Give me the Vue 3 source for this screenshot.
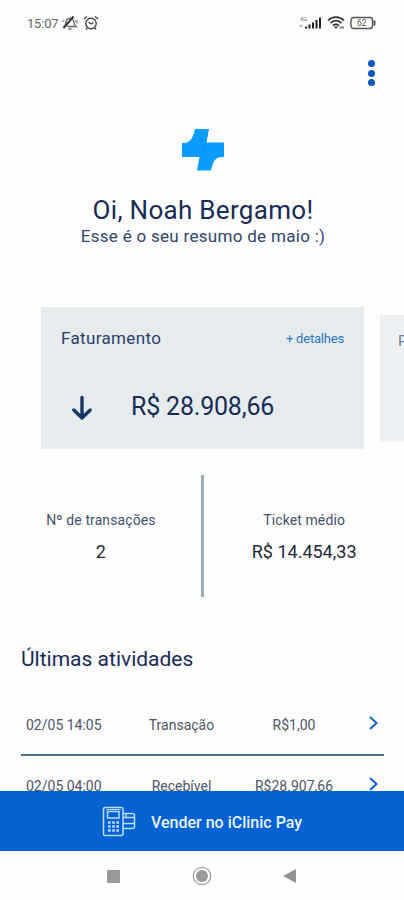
<script setup>
const activities = [
  { date: '02/05 14:05', kind: 'Transação', value: 'R$1,00' },
  { date: '02/05 04:00', kind: 'Recebível', value: 'R$28.907,66' },
]
</script>

<template>
  <div class="screen">
    <header class="status">
      <span class="time">15:07</span>
      <svg class="bell" width="17" height="16" viewBox="0 0 17 16" fill="none" stroke="#666" stroke-width="1.3">
        <path d="M4 10.500C5 9 4.500 6.500 6 4.500C8 2.600 11.500 3 12.500 5.500C13.300 8 13 10 15 11.500H6M7.500 14H10.500" />
        <path d="M2.500 13L12.500 1.500" stroke="#333" stroke-width="2" />
        <path d="M0.500 6.500L3.500 5.500M14 6.500L16 6V8.500" stroke="#888" />
      </svg>
      <svg class="alarm" width="16" height="16" viewBox="0 0 16 16" fill="none" stroke="#444" stroke-width="1.4">
        <circle cx="8" cy="8.500" r="5.200" />
        <path d="M1 4L4 1.500M12 1.500L15 4M5.500 7L8 9L10.500 7.500M4 13L3 14.500M12 13L13 14.500" />
      </svg>
      <span class="grow"></span>
      <svg class="signal" width="24" height="16" viewBox="0 0 24 16" fill="#222">
        <text x="2" y="5.500" font-size="6" fill="#777">4G</text>
        <path d="M1 11H5M3 9.500V12.500" stroke="#aaa" />
        <path d="M7 11.500h2.200v2H7zM10.500 9.500h2v4h-2zM14 7.500h2v6h-2zM17.500 5h2v8.500h-2zM21 2.500h2v11h-2z" />
      </svg>
      <svg class="wifi" width="18" height="16" viewBox="0 0 18 16" fill="none" stroke="#333" stroke-width="1.7">
        <path d="M1 5.500C5.500 1 12.500 1 17 5.500M3.500 8C7 5 11 5 14.500 8M6 10.500C8 9 10 9 12 10.500" />
        <path d="M7 11.500H11L9 14Z" fill="#333" stroke="none" />
        <path d="M12.500 12.500H17" stroke="#999" stroke-width="2.500" />
      </svg>
      <svg class="battery" width="27" height="14" viewBox="0 0 27 14" fill="none" stroke="#555" stroke-width="1.4">
        <rect x="1" y="1.500" width="21.500" height="11" rx="2.500" />
        <path d="M24.500 4.500V9.500" stroke-width="2" />
        <text x="7" y="10" font-size="8.500" fill="#555" stroke="none">62</text>
      </svg>
    </header>

    <div class="menu"><i></i><i></i><i></i></div>

    <svg class="logo" width="42" height="42" viewBox="0 0 42 42">
      <path d="M13 0H27L24.500 13.500H42V28H40C34.500 28 32 31.500 30.500 36L29 41.500H15L17.500 28H0V14H2C8 13.500 10.500 9 12 4Z" fill="#0b9dfd" />
      <path d="M24.500 13.500C23.500 21 20.500 26 14 28H17.500C18.500 22 20 17 24.500 13.500Z" fill="#0b93f5" />
    </svg>

    <h1>Oi, Noah Bergamo!</h1>
    <p class="summary">Esse é o seu resumo de maio :)</p>

    <section class="carousel">
      <article class="card">
        <div class="card-head">
          <span class="card-title">Faturamento</span>
          <a class="details">+ detalhes</a>
        </div>
        <div class="card-value">
          <svg width="22" height="26" viewBox="0 0 22 26" fill="none" stroke="#173763" stroke-width="3.4" stroke-linecap="round" stroke-linejoin="round">
            <path d="M11 2.500V22.500M2.800 15L11 23L19.200 15" />
          </svg>
          <span class="amount">R$ 28.908,66</span>
        </div>
      </article>
      <article class="next-card">P</article>
    </section>

    <section class="stats">
      <div class="stat">
        <span class="label">Nº de transações</span>
        <span class="number">2</span>
      </div>
      <div class="divider"></div>
      <div class="stat">
        <span class="label">Ticket médio</span>
        <span class="number">R$ 14.454,33</span>
      </div>
    </section>

    <section class="activities">
      <h2>Últimas atividades</h2>
      <div v-for="item in activities" :key="item.date" class="row">
        <span class="date">{{ item.date }}</span>
        <span class="kind">{{ item.kind }}</span>
        <span class="value">{{ item.value }}</span>
        <svg width="9" height="14" viewBox="0 0 9 14" fill="none" stroke="#0d62cb" stroke-width="2">
          <path d="M1 1L7.500 7L1 13" />
        </svg>
      </div>
    </section>

    <button class="sell">
      <svg width="34" height="31" viewBox="0 0 34 31" fill="none" stroke="#b9dcff" stroke-width="1.5">
        <rect x="1.500" y="1.500" width="19.500" height="28" rx="1.500" />
        <rect x="5.500" y="5.500" width="11.500" height="6.500" />
        <path d="M4 3.500H18.500" stroke-width="1" />
        <path d="M6 16.500H17M6 20.500H17M6 24.500H17" stroke-width="2.400" stroke-dasharray="2.600 1.600" />
        <path d="M21 7.500H30.500Q32.500 7.500 32.500 9.500V20.500Q32.500 22.500 30.500 22.500H21M21 11.500H32.500M21 17.500H32.500M24 7.500V11.500" />
      </svg>
      <span>Vender no iClinic Pay</span>
    </button>

    <nav class="system">
      <svg width="13" height="13" viewBox="0 0 13 13"><path d="M0 0H13V13H0Z" fill="#999" /></svg>
      <svg width="20" height="20" viewBox="0 0 20 20">
        <circle cx="10" cy="10" r="8.700" fill="none" stroke="#a3a3a3" stroke-width="1.300" />
        <circle cx="10" cy="10" r="6" fill="#999" />
      </svg>
      <svg width="13" height="14" viewBox="0 0 13 14"><path d="M0 7L13 0V14Z" fill="#929292" /></svg>
    </nav>
  </div>
</template>

<style>
body { margin: 0; background: #fefefe; }
</style>

<style scoped>
.screen {
  width: 404px;
  height: 900px;
  overflow: hidden;
  display: flex;
  flex-direction: column;
  background: #fefefe;
  color: #182b57;
  font-family: Roboto, "Liberation Sans", sans-serif;
}
svg { display: block; flex: none; }
.status {
  height: 46px;
  flex: none;
  box-sizing: border-box;
  padding: 0 27px;
  display: flex;
  align-items: center;
  color: #666;
}
.time { width: 33px; font-size: 13px; letter-spacing: -0.2px; white-space: nowrap; }
.bell { margin-left: 1px; }
.alarm { margin-left: 5px; }
.grow { flex: 1; }
.wifi { margin-left: 5px; }
.battery { margin-left: 5px; }
.menu {
  flex: none;
  height: 82.5px;
  box-sizing: border-box;
  padding: 14px 29px 0 0;
  display: flex;
  flex-direction: column;
  align-items: flex-end;
  gap: 2.6px;
}
.menu i { width: 7px; height: 7px; border-radius: 50%; background: #0b58bd; }
.logo { margin-left: 181.5px; }
h1 {
  margin: 24.5px 0 0 2px;
  height: 30px;
  line-height: 30px;
  text-align: center;
  font-size: 26px;
  font-weight: 400;
  letter-spacing: 0.3px;
  flex: none;
}
.summary {
  margin: 0 0 0 2px;
  height: 22px;
  line-height: 22px;
  text-align: center;
  font-size: 17px;
  letter-spacing: 0.3px;
  color: #30446d;
  flex: none;
}
.carousel {
  flex: none;
  height: 142px;
  margin-top: 60px;
  padding-left: 41px;
  display: flex;
  align-items: center;
  gap: 16px;
}
.card {
  width: 323px;
  height: 142px;
  flex: none;
  box-sizing: border-box;
  padding: 20px 20px 0;
  background: #e6ebee;
}
.card-head { display: flex; justify-content: space-between; align-items: center; height: 22px; }
.card-title { font-size: 17px; letter-spacing: 0.35px; color: #2c406a; }
.details { font-size: 13px; letter-spacing: -0.2px; color: #2c78c4; }
.card-value { display: flex; align-items: center; height: 30px; margin-top: 42px; padding: 0 11px 0 10px; gap: 38px; }
.amount { font-size: 25px; letter-spacing: -0.2px; }
.card-value svg { margin-top: 3px; }
.next-card {
  flex: 1;
  height: 127px;
  box-sizing: border-box;
  padding: 17px 0 0 18px;
  overflow: hidden;
  background: #edf1f4;
  color: #77808f;
  font-size: 15px;
}
.stats { flex: none; height: 122px; margin-top: 26px; display: flex; }
.stat { flex: 1; display: flex; flex-direction: column; align-items: center; padding-top: 35px; }
.stat:first-child { padding-left: 1px; }
.divider { width: 3.5px; background: #9bb0b5; }
.label { font-size: 14px; line-height: 20px; letter-spacing: 0.1px; color: #43516f; }
.number { margin-top: 10px; font-size: 18px; line-height: 24px; color: #202938; }
.activities { flex: 1; min-height: 0; overflow: hidden; padding: 47px 20px 0 21px; }
h2 { margin: 0; height: 30px; line-height: 31px; font-size: 21px; font-weight: 400; }
.row {
  height: 61px;
  box-sizing: border-box;
  display: grid;
  grid-template-columns: 88px 135px 90px 9px;
  align-items: center;
  border-bottom: 2px solid #487487;
  padding: 0 0 0 5px;
  font-size: 14px;
  color: #4c5568;
  white-space: nowrap;
}
h2 + .row { margin-top: 21px; }
.kind, .value { text-align: center; }
.row svg { margin: 0 0 4px 30px; }
.sell {
  flex: none;
  height: 60px;
  border: 0;
  padding: 0 0 0 102px;
  display: flex;
  align-items: center;
  gap: 15px;
  background: #0562d2;
  color: #e8f2ff;
  font: 500 16px Roboto, "Liberation Sans", sans-serif;
}
.sell span { padding-top: 2px; }
.system {
  flex: none;
  height: 49px;
  box-sizing: border-box;
  padding: 1px 108px 0 107px;
  display: flex;
  align-items: center;
  justify-content: space-between;
}
</style>
